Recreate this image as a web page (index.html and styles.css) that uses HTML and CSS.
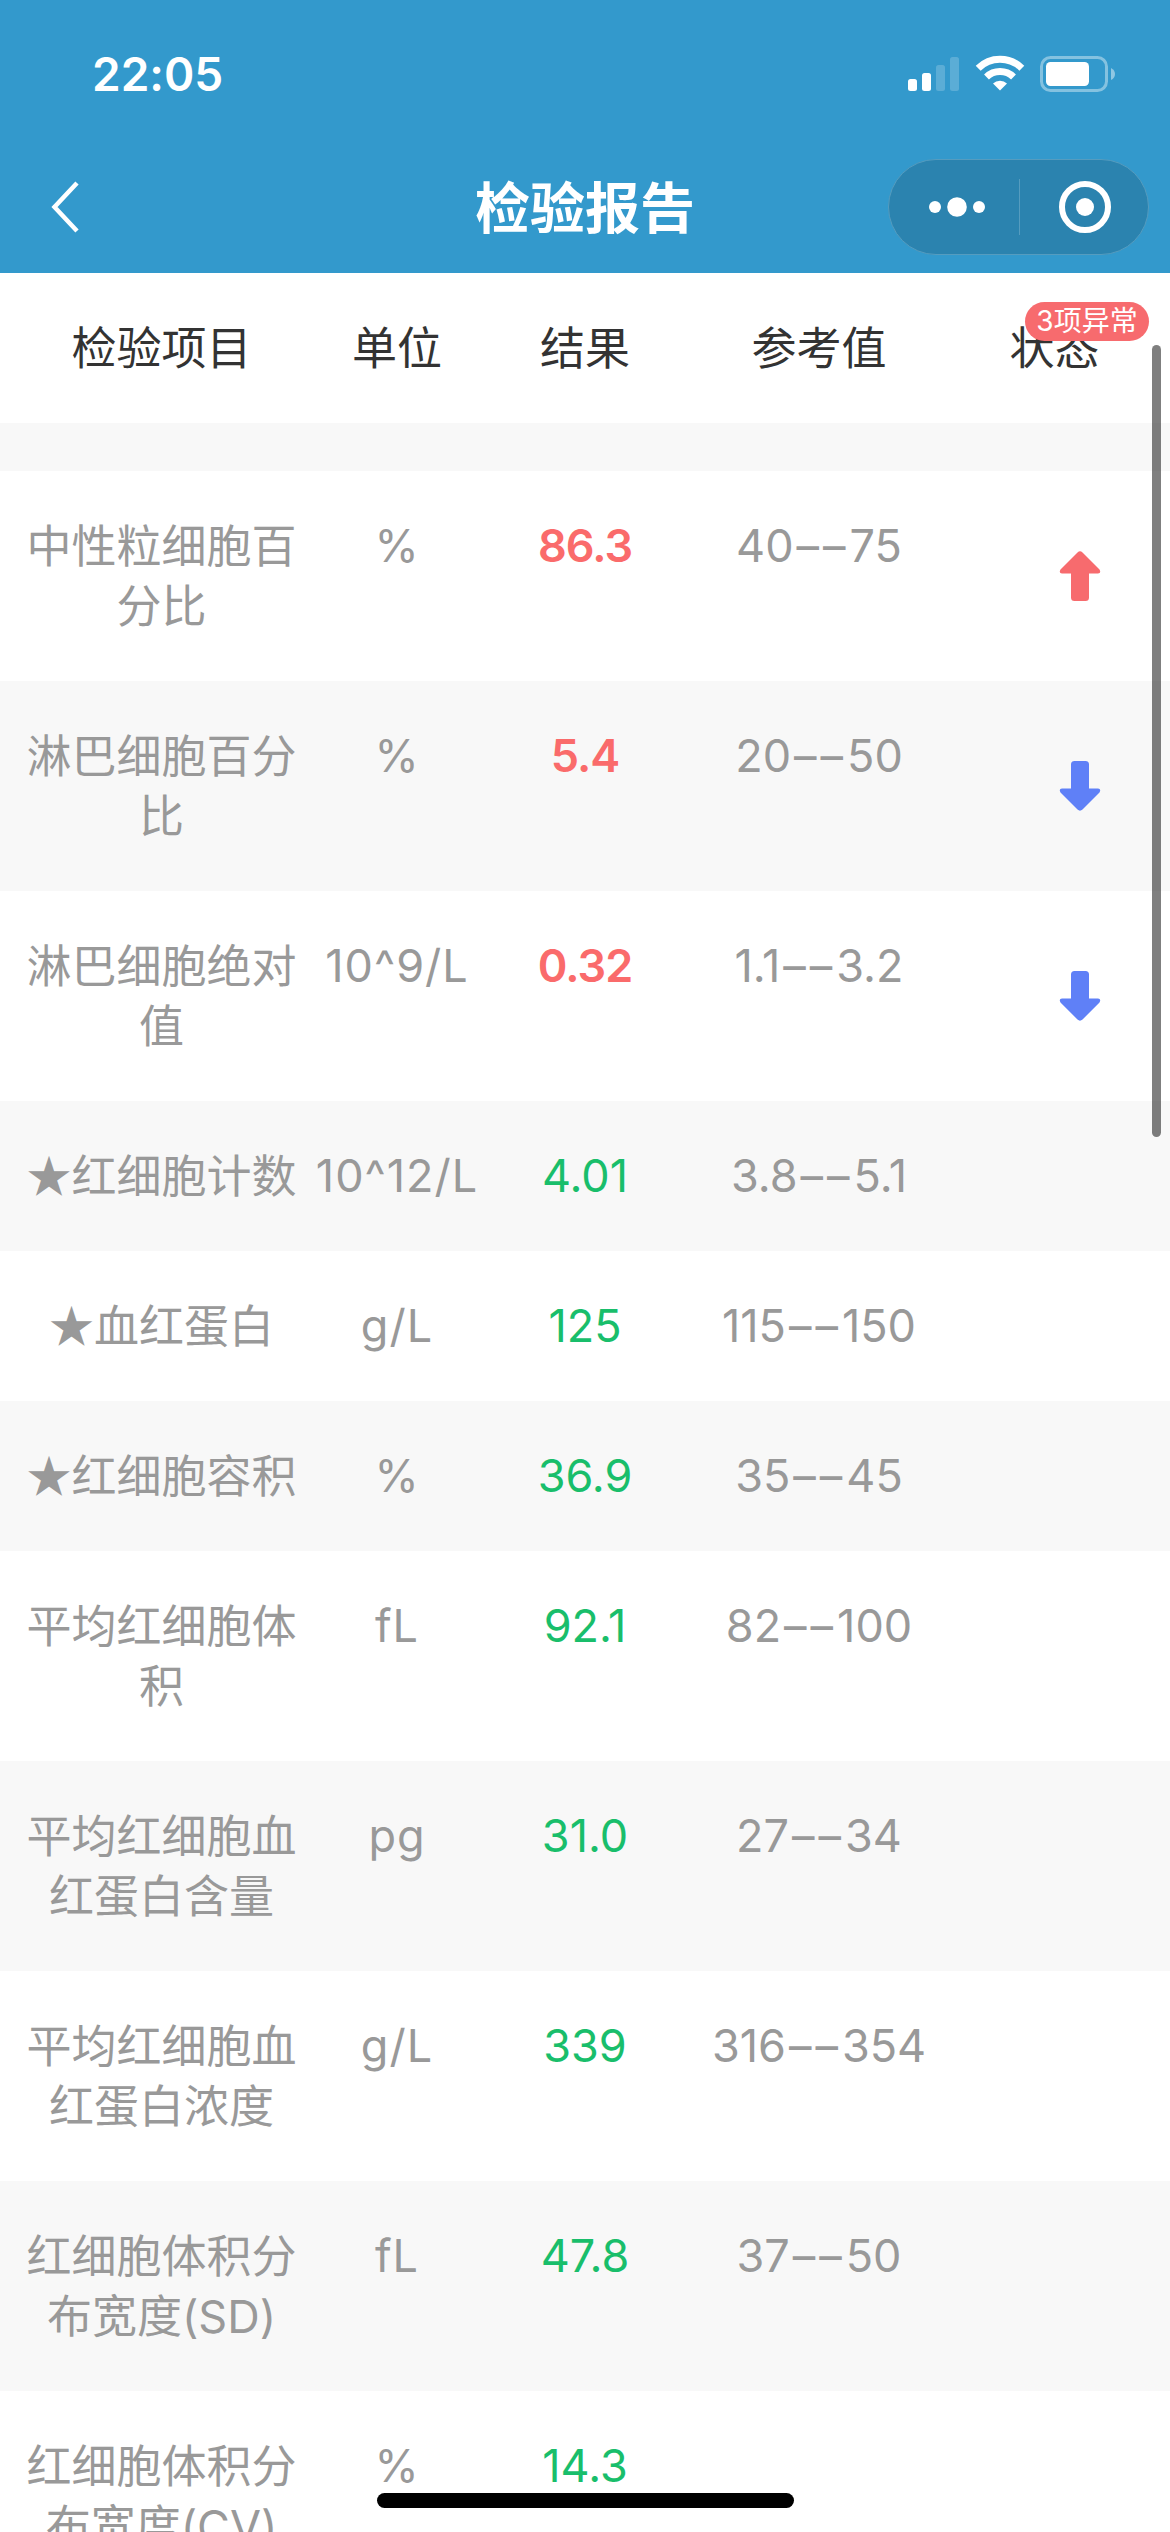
FILE: index.html
```
<!DOCTYPE html>
<html lang="zh-CN">
<head>
    <meta charset="UTF-8">
    <meta name="viewport" content="width=device-width, initial-scale=1.0">
    <title>检验报告</title>
    <link rel="stylesheet" href="styles.css">
</head>
<body>
    <div class="page">
        <header class="header">
            <div class="status-bar">
                <div class="time">22:05</div>
                <div class="status-icons">
                    <svg class="signal" width="52" height="36" viewBox="0 0 52 36" fill="#fff">
                        <rect x="0" y="23" width="9" height="12" rx="2.5"/>
                        <rect x="14" y="17" width="9" height="18" rx="2.5"/>
                        <rect x="28" y="9" width="9" height="26" rx="2.5" opacity=".2"/>
                        <rect x="42" y="1" width="9" height="34" rx="2.5" opacity=".2"/>
                    </svg>
                    <svg class="wifi" width="50" height="38" viewBox="0 0 50 38" fill="none" stroke="#fff" stroke-width="7">
                        <path d="M3.2 14.2A31 31 0 0 1 46.800 14.200"/>
                        <path d="M11.500 23A19.500 19.500 0 0 1 38.500 23"/>
                        <path d="M25 36.500L18 29.500A10 10 0 0 1 32 29.500Z" fill="#fff" stroke="none"/>
                    </svg>
                    <svg class="battery" width="76" height="36" viewBox="0 0 76 36">
                        <rect x="1.500" y="1.500" width="65" height="33" rx="9" fill="none" stroke="#fff" stroke-width="3" opacity=".4"/>
                        <rect x="6" y="6" width="43" height="24" rx="4.500" fill="#fff"/>
                        <path d="M71 12Q75 14 75 18T71 24Z" fill="#fff" opacity=".45"/>
                    </svg>
                </div>
            </div>
            <div class="nav-bar">
                <svg class="back" width="30" height="54" viewBox="0 0 30 54" fill="none" stroke="#fff" stroke-width="4.500">
                    <path d="M27 3L4.500 27L27 51"/>
                </svg>
                <div class="title">检验报告</div>
                <div class="capsule">
                    <svg class="more" width="60" height="24" viewBox="0 0 60 24" fill="#fff">
                        <circle cx="8" cy="12" r="6"/>
                        <circle cx="30" cy="12" r="9.800"/>
                        <circle cx="52" cy="12" r="6"/>
                    </svg>
                    <div class="divider"></div>
                    <svg class="close" width="54" height="54" viewBox="0 0 54 54">
                        <circle cx="27" cy="27" r="23" fill="none" stroke="#fff" stroke-width="6"/>
                        <circle cx="27" cy="27" r="9" fill="#fff"/>
                    </svg>
                </div>
            </div>
        </header>

        <div class="row table-head">
            <div class="name">检验项目</div>
            <div>单位</div>
            <div>结果</div>
            <div>参考值</div>
            <div>状态</div>
            <div class="badge">3项异常</div>
        </div>
        <div class="gap"></div>

        <div class="table">
            <div class="row">
                <div class="name">中性粒细胞百分比</div>
                <div class="unit">%</div>
                <div class="result abnormal">86.3</div>
                <div class="range">40<span class="dash">––</span>75</div>
                <div class="state">
                    <svg class="arrow up" width="42" height="50" viewBox="0 0 42 50"><path d="M18.500 1.500Q21 -.8 23.500 1.500L40.500 18.500Q42.500 22 39 22.500H30V46.500Q30 50 26.500 50H15.500Q12 50 12 46.500V22.500H3Q-.5 22 1.500 18.500Z"/></svg>
                </div>
            </div>
            <div class="row">
                <div class="name">淋巴细胞百分比</div>
                <div class="unit">%</div>
                <div class="result abnormal">5.4</div>
                <div class="range">20<span class="dash">––</span>50</div>
                <div class="state">
                    <svg class="arrow down" width="42" height="50" viewBox="0 0 42 50"><path d="M18.500 1.500Q21 -.8 23.500 1.500L40.500 18.500Q42.500 22 39 22.500H30V46.500Q30 50 26.500 50H15.500Q12 50 12 46.500V22.500H3Q-.5 22 1.500 18.500Z"/></svg>
                </div>
            </div>
            <div class="row">
                <div class="name">淋巴细胞绝对值</div>
                <div class="unit">10^9/L</div>
                <div class="result abnormal">0.32</div>
                <div class="range">1.1<span class="dash">––</span>3.2</div>
                <div class="state">
                    <svg class="arrow down" width="42" height="50" viewBox="0 0 42 50"><path d="M18.500 1.500Q21 -.8 23.500 1.500L40.500 18.500Q42.500 22 39 22.500H30V46.500Q30 50 26.500 50H15.500Q12 50 12 46.500V22.500H3Q-.5 22 1.500 18.500Z"/></svg>
                </div>
            </div>
            <div class="row">
                <div class="name"><span class="star">★</span>红细胞计数</div>
                <div class="unit">10^12/L</div>
                <div class="result">4.01</div>
                <div class="range">3.8<span class="dash">––</span>5.1</div>
                <div class="state"></div>
            </div>
            <div class="row">
                <div class="name"><span class="star">★</span>血红蛋白</div>
                <div class="unit">g/L</div>
                <div class="result">125</div>
                <div class="range">115<span class="dash">––</span>150</div>
                <div class="state"></div>
            </div>
            <div class="row">
                <div class="name"><span class="star">★</span>红细胞容积</div>
                <div class="unit">%</div>
                <div class="result">36.9</div>
                <div class="range">35<span class="dash">––</span>45</div>
                <div class="state"></div>
            </div>
            <div class="row">
                <div class="name">平均红细胞体积</div>
                <div class="unit">fL</div>
                <div class="result">92.1</div>
                <div class="range">82<span class="dash">––</span>100</div>
                <div class="state"></div>
            </div>
            <div class="row">
                <div class="name">平均红细胞血红蛋白含量</div>
                <div class="unit">pg</div>
                <div class="result">31.0</div>
                <div class="range">27<span class="dash">––</span>34</div>
                <div class="state"></div>
            </div>
            <div class="row">
                <div class="name">平均红细胞血红蛋白浓度</div>
                <div class="unit">g/L</div>
                <div class="result">339</div>
                <div class="range">316<span class="dash">––</span>354</div>
                <div class="state"></div>
            </div>
            <div class="row">
                <div class="name">红细胞体积分布宽度(SD)</div>
                <div class="unit">fL</div>
                <div class="result">47.8</div>
                <div class="range">37<span class="dash">––</span>50</div>
                <div class="state"></div>
            </div>
            <div class="row">
                <div class="name">红细胞体积分布宽度(CV)</div>
                <div class="unit">%</div>
                <div class="result">14.3</div>
                <div class="range"></div>
                <div class="state"></div>
            </div>
        </div>

        <div class="scrollbar"></div>
        <div class="home-indicator"></div>
    </div>
</body>
</html>
```

FILE: styles.css
```
* {
    box-sizing: border-box;
}

body {
    margin: 0;
    background-color: #fff;
    font-family: Inter, "Noto Sans CJK SC", sans-serif;
    font-size: 45px;
    line-height: 60px;
    font-feature-settings: "calt" 0;
    color: #999;
}

.page {
    position: relative;
    width: 1170px;
    height: 2532px;
    overflow: hidden;
}

svg {
    display: block;
    flex: none;
}

/* header */
.header {
    height: 273px;
    background-color: #3399cc;
    color: #fff;
}

.status-bar {
    display: flex;
    justify-content: space-between;
    height: 141px;
    padding: 44px 54px 0 92px;
}

.time {
    font-size: 46px;
    font-weight: 600;
}

.status-icons {
    display: flex;
    padding-top: 12px;
}

.wifi {
    margin: -2px 15px 0;
}

.nav-bar {
    display: grid;
    grid-template-columns: 282px 606px 261px;
    align-items: center;
    height: 132px;
}

.back {
    margin-left: 50px;
}

.title {
    padding-top: 1px;
    text-align: center;
    font-size: 55px;
    font-weight: 600;
}

.capsule {
    display: flex;
    align-items: center;
    height: 96px;
    border: 1px solid #559cbf;
    border-radius: 48px;
    background-color: #2b83af;
}

.more {
    margin: 0 32px 0 38px;
}

.divider {
    width: 1px;
    height: 56px;
    background-color: #559cbf;
}

.close {
    margin-left: 38px;
}

/* table */
.row {
    display: grid;
    grid-template-columns: 323px 148px 228px 240px 231px;
    padding: 45px 0;
    text-align: center;
    white-space: nowrap;
}

.row > div {
    display: flex;
    justify-content: center;
}

.row > .name {
    display: block;
    padding: 1px 24px 0;
    margin-bottom: -1px;
    white-space: normal;
    word-break: break-all;
}

.star {
    font-family: "Noto Sans CJK SC", sans-serif;
    line-height: 1;
}

.row > .unit {
    letter-spacing: 1px;
}

.dash {
    padding-left: 3px;
    letter-spacing: 4px;
}

.table-head {
    position: relative;
    height: 150px;
    padding-top: 46px;
    color: #333;
}

.table-head > .name {
    padding-top: 0;
}

.row > .badge {
    position: absolute;
    top: 29px;
    right: 21px;
    width: 124px;
    height: 39px;
    border-radius: 20px;
    background-color: #f76b6e;
    color: #fff;
    font-size: 28px;
    line-height: 38px;
}

.gap {
    height: 48px;
    background-color: #f8f8f8;
}

.table .row:nth-child(even) {
    background-color: #f8f8f8;
}

.result {
    color: #19be6b;
}

.abnormal {
    color: #fa6b6b;
    font-weight: 600;
    letter-spacing: -1px;
}

.row > .state {
    align-items: center;
    padding-left: 51px;
}

.arrow {
    fill: #f76b6e;
}

.down {
    fill: #5f80f7;
    transform: rotate(180deg);
}

/* overlays */
.scrollbar {
    position: absolute;
    top: 345px;
    right: 9px;
    width: 9px;
    height: 792px;
    border-radius: 5px;
    background-color: rgba(0, 0, 0, 0.5);
}

.home-indicator {
    position: absolute;
    bottom: 24px;
    left: 377px;
    width: 417px;
    height: 15px;
    border-radius: 8px;
    background-color: #000;
}
```
